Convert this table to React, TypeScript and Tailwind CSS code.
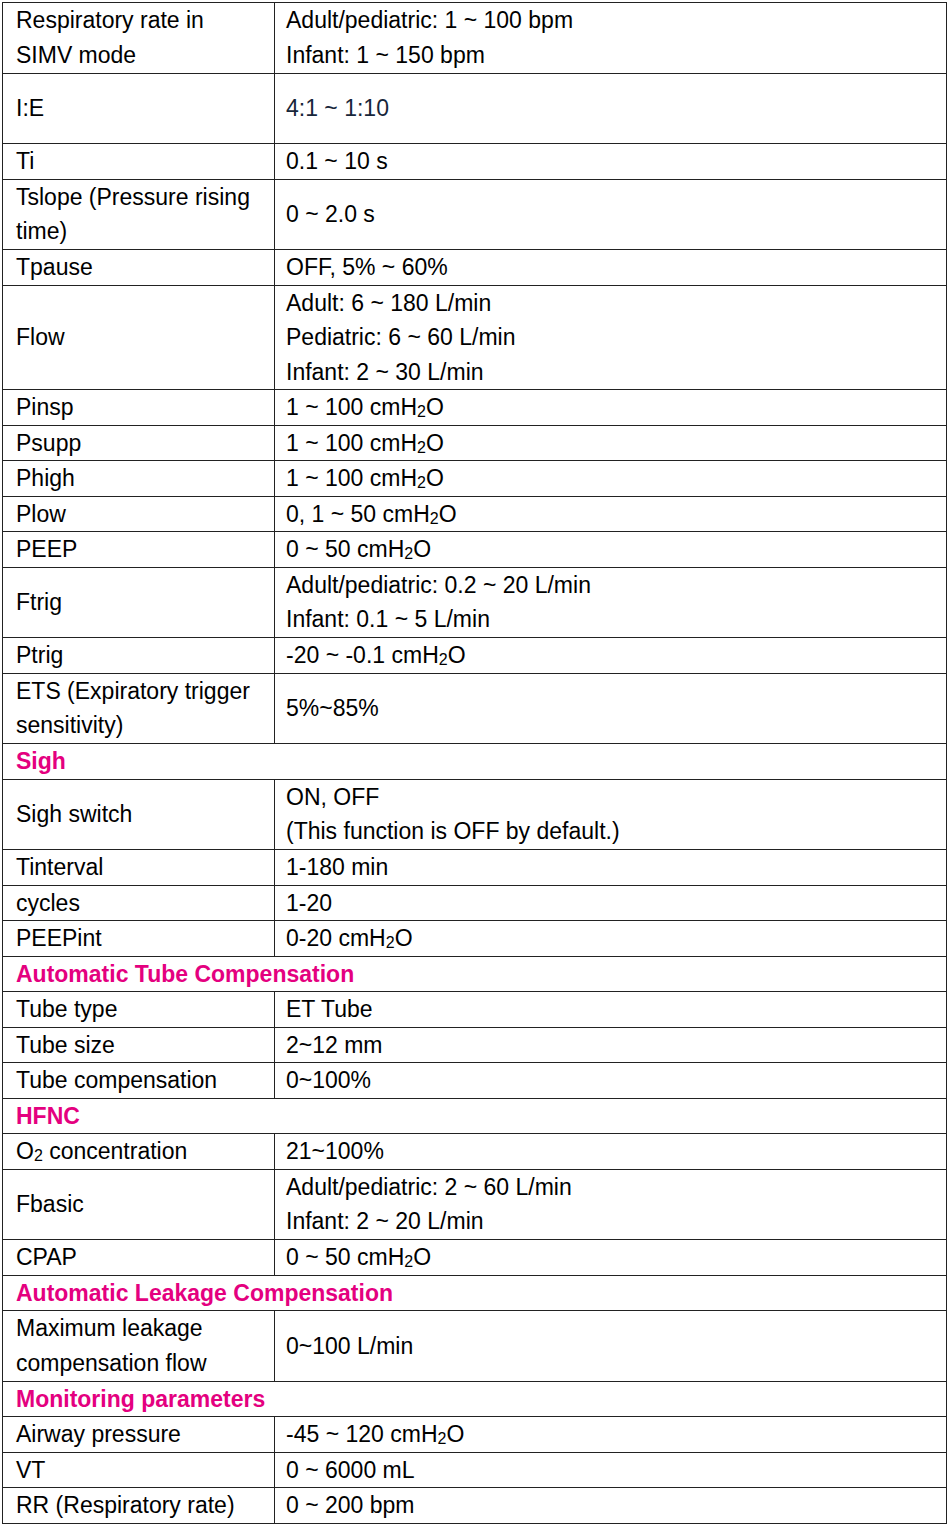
import React from 'react';

const PINK = 'text-[#e4007f]';

// fixed row heights, by number of text lines
const HEIGHT: Record<number, string> = {
  1: 'h-[35.5px]',
  2: 'h-[70.5px]',
  3: 'h-[104.5px]',
};

type Row =
  | { kind: 'section'; title: string }
  | { kind: 'item'; label: React.ReactNode; value: React.ReactNode; lines?: number; valueClass?: string };

const Sub2 = () => <span className="text-[16px] leading-none align-[-2px]">2</span>;

const H2O = () => (
  <>
    cmH<Sub2 />O
  </>
);

const rows: Row[] = [
  {
    kind: 'item',
    lines: 2,
    label: (
      <>
        Respiratory rate in
        <br />
        SIMV mode
      </>
    ),
    value: (
      <>
        Adult/pediatric: 1 ~ 100 bpm
        <br />
        Infant: 1 ~ 150 bpm
      </>
    ),
  },
  { kind: 'item', lines: 2, label: 'I:E', value: '4:1 ~ 1:10', valueClass: 'text-[#17263a]' },
  { kind: 'item', label: 'Ti', value: '0.1 ~ 10 s' },
  {
    kind: 'item',
    lines: 2,
    label: (
      <>
        Tslope (Pressure rising
        <br />
        time)
      </>
    ),
    value: '0 ~ 2.0 s',
  },
  { kind: 'item', label: 'Tpause', value: 'OFF, 5% ~ 60%' },
  {
    kind: 'item',
    lines: 3,
    label: 'Flow',
    value: (
      <>
        Adult: 6 ~ 180 L/min
        <br />
        Pediatric: 6 ~ 60 L/min
        <br />
        Infant: 2 ~ 30 L/min
      </>
    ),
  },
  { kind: 'item', label: 'Pinsp', value: <>1 ~ 100 <H2O /></> },
  { kind: 'item', label: 'Psupp', value: <>1 ~ 100 <H2O /></> },
  { kind: 'item', label: 'Phigh', value: <>1 ~ 100 <H2O /></> },
  { kind: 'item', label: 'Plow', value: <>0, 1 ~ 50 <H2O /></> },
  { kind: 'item', label: 'PEEP', value: <>0 ~ 50 <H2O /></> },
  {
    kind: 'item',
    lines: 2,
    label: 'Ftrig',
    value: (
      <>
        Adult/pediatric: 0.2 ~ 20 L/min
        <br />
        Infant: 0.1 ~ 5 L/min
      </>
    ),
  },
  { kind: 'item', label: 'Ptrig', value: <>-20 ~ -0.1 <H2O /></> },
  {
    kind: 'item',
    lines: 2,
    label: (
      <>
        ETS (Expiratory trigger
        <br />
        sensitivity)
      </>
    ),
    value: '5%~85%',
  },
  { kind: 'section', title: 'Sigh' },
  {
    kind: 'item',
    lines: 2,
    label: 'Sigh switch',
    value: (
      <>
        ON, OFF
        <br />
        (This function is OFF by default.)
      </>
    ),
  },
  { kind: 'item', label: 'Tinterval', value: '1-180 min' },
  { kind: 'item', label: 'cycles', value: '1-20' },
  { kind: 'item', label: 'PEEPint', value: <>0-20 <H2O /></> },
  { kind: 'section', title: 'Automatic Tube Compensation' },
  { kind: 'item', label: 'Tube type', value: 'ET Tube' },
  { kind: 'item', label: 'Tube size', value: '2~12 mm' },
  { kind: 'item', label: 'Tube compensation', value: '0~100%' },
  { kind: 'section', title: 'HFNC' },
  {
    kind: 'item',
    label: (
      <>
        O<Sub2 /> concentration
      </>
    ),
    value: '21~100%',
  },
  {
    kind: 'item',
    lines: 2,
    label: 'Fbasic',
    value: (
      <>
        Adult/pediatric: 2 ~ 60 L/min
        <br />
        Infant: 2 ~ 20 L/min
      </>
    ),
  },
  { kind: 'item', label: 'CPAP', value: <>0 ~ 50 <H2O /></> },
  { kind: 'section', title: 'Automatic Leakage Compensation' },
  {
    kind: 'item',
    lines: 2,
    label: (
      <>
        Maximum leakage
        <br />
        compensation flow
      </>
    ),
    value: '0~100 L/min',
  },
  { kind: 'section', title: 'Monitoring parameters' },
  { kind: 'item', label: 'Airway pressure', value: <>-45 ~ 120 <H2O /></> },
  { kind: 'item', label: 'VT', value: '0 ~ 6000 mL' },
  { kind: 'item', label: 'RR (Respiratory rate)', value: '0 ~ 200 bpm' },
];

export default function App() {
  return (
    <div className="min-h-[1528px] w-[950px] bg-white pt-[2px] pl-[2px] font-['Liberation_Sans',Arial,sans-serif] text-[23px] leading-[34.5px] text-black">
      <table className="w-[945px] border-collapse border border-[#222]">
        <tbody>
          {rows.map((row, i) =>
            row.kind === 'section' ? (
              <tr key={i}>
                <td
                  colSpan={2}
                  className={`h-[35.5px] border border-[#222] p-0 pl-[13px] pr-[12px] align-middle font-bold ${PINK}`}
                >
                  {row.title}
                </td>
              </tr>
            ) : (
              <tr key={i}>
                <td
                  className={`w-[272px] border border-[#222] p-0 pl-[13px] pr-[8px] align-middle ${HEIGHT[row.lines ?? 1]}`}
                >
                  {row.label}
                </td>
                <td
                  className={`border border-[#222] p-0 pl-[11px] pr-[12px] align-middle ${HEIGHT[row.lines ?? 1]} ${row.valueClass ?? ''}`}
                >
                  {row.value}
                </td>
              </tr>
            ),
          )}
        </tbody>
      </table>
    </div>
  );
}
